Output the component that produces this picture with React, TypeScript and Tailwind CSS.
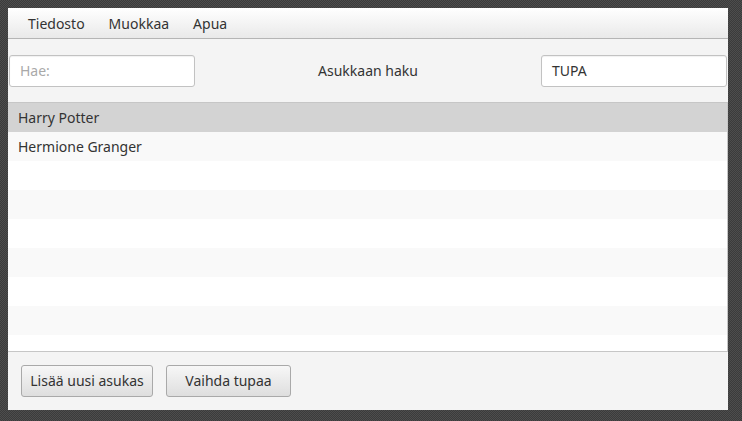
import React from 'react';

const residents = ['Harry Potter', 'Hermione Granger'];
const emptyRows = 7;

const App: React.FC = () => {
    const rows = [...residents, ...Array(emptyRows).fill('')];

    return (
        <div
            className="w-[742px] h-[421px] pl-[8px] pt-[8px] bg-[repeating-conic-gradient(#3b3b3b_0_25%,#4d4d4d_0_50%)] bg-[length:2px_2px] overflow-hidden"
            style={{ fontFamily: '"Noto Sans", "Open Sans", sans-serif' }}
        >
            <div className="w-[720px] h-[402px] flex flex-col bg-[#f4f4f4] text-[#333333] text-[14px]">
                {/* menu */}
                <div className="h-[31px] shrink-0 flex items-center gap-[24px] pl-[20px] bg-gradient-to-b from-white to-[#e9e9e9] border-b border-[#b5b5b5]">
                    <span>Tiedosto</span>
                    <span>Muokkaa</span>
                    <span>Apua</span>
                </div>

                {/* haku */}
                <div className="h-[63px] shrink-0 flex items-center justify-between px-[1px]">
                    <div className="w-[186px] h-[32px] flex items-center px-[10px] bg-white border border-[#c2c2c2] rounded-[3px] shadow-[inset_0_1px_1px_rgba(0,0,0,0.06)] text-[#a9a9a9]">
                        Hae:
                    </div>
                    <span>Asukkaan haku</span>
                    <div className="w-[186px] h-[32px] flex items-center px-[10px] bg-white border border-[#c2c2c2] rounded-[3px] shadow-[inset_0_1px_1px_rgba(0,0,0,0.06)]">
                        TUPA
                    </div>
                </div>

                {/* lista */}
                <div className="h-[250px] shrink-0 flex flex-col overflow-hidden bg-white border-y border-r border-[#c6c6c6]">
                    {rows.map((name, i) => (
                        <div
                            key={i}
                            className={`h-[29px] shrink-0 flex items-center pl-[10px] ${
                                i === 0 ? 'bg-[#d3d3d3]' : i % 2 === 1 ? 'bg-[#f9f9f9]' : 'bg-white'
                            }`}
                        >
                            {name}
                        </div>
                    ))}
                </div>

                {/* napit */}
                <div className="flex-1 flex items-center gap-[13px] pl-[13px] pb-[1px]">
                    <button className="w-[132px] h-[32px] rounded-[3px] border border-[#a9a9a9] bg-gradient-to-b from-[#f7f7f7] to-[#dedede]">
                        Lisää uusi asukas
                    </button>
                    <button className="w-[125px] h-[32px] rounded-[3px] border border-[#a9a9a9] bg-gradient-to-b from-[#f7f7f7] to-[#dedede]">
                        Vaihda tupaa
                    </button>
                </div>
            </div>
        </div>
    );
};

export default App;
